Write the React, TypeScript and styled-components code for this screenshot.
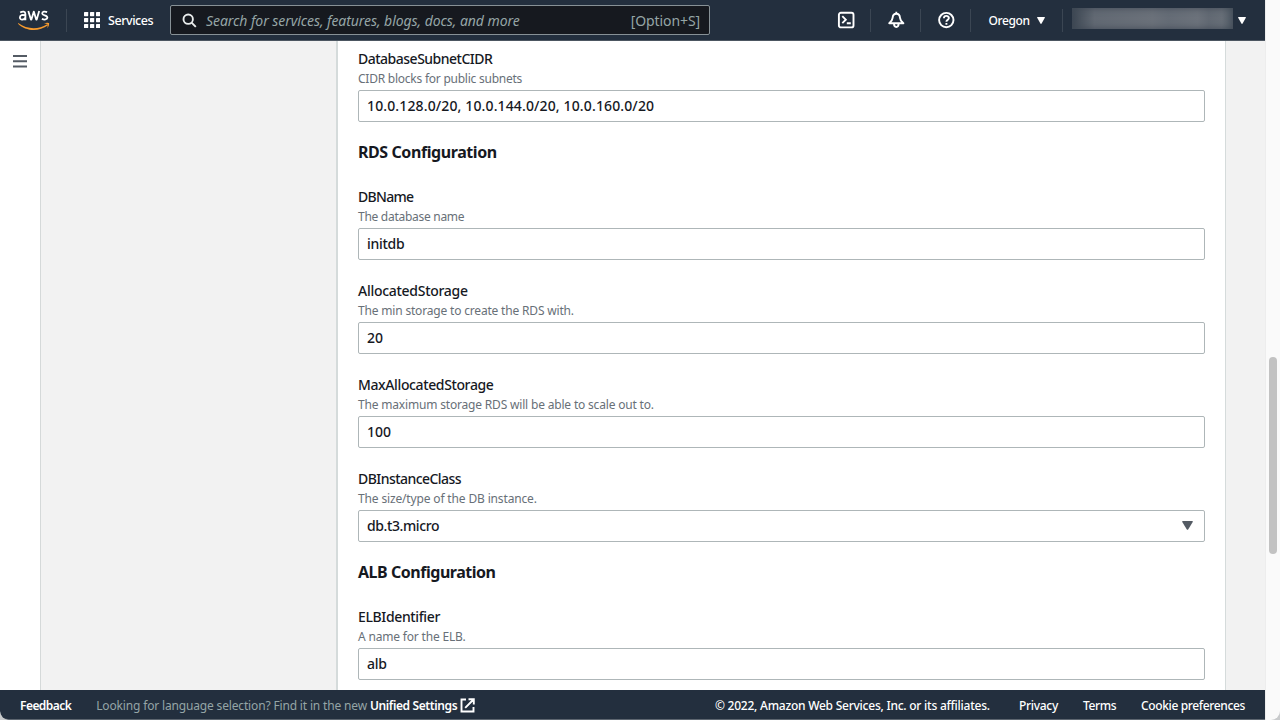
import React from 'react';
import styled, { createGlobalStyle } from 'styled-components';

const GlobalStyle = createGlobalStyle`
  * { box-sizing: border-box; }
  body { margin: 0; background: #c8cacc; overflow: hidden; }
  body, input, button { font-family: 'Noto Sans', 'Open Sans', sans-serif; }
`;

const Browser = styled.div`
  display: flex;
  width: 1280px;
  height: 720px;
  background: #fafafa;
  border-radius: 0 0 9px 9px;
  overflow: hidden;
`;

const Page = styled.div`
  display: flex;
  flex-direction: column;
  width: 1265px;
  height: 720px;
`;

const Track = styled.div`
  flex: 1;
  padding: 357px 3px 0 4px;
  border-left: 1px solid #ededed;
`;

const Thumb = styled.div`
  width: 8px;
  height: 197px;
  margin-left: -1px;
  border-radius: 4px;
  background: #c2c2c2;
`;

const Header = styled.header`
  display: flex;
  align-items: center;
  flex: none;
  height: 41px;
  background: #232f3e;
  border-bottom: 1px solid #4c5661;
  color: #fff;
`;

const LogoLink = styled.div`
  display: flex;
  width: 67px;
  padding-left: 17px;
  border-right: 1px solid #3b4653;
  height: 23px;
`;

const Services = styled.div`
  display: flex;
  align-items: center;
  gap: 8px;
  width: 103px;
  padding-left: 17px;
  svg { flex: none; }
`;

const Label = styled.span<{ $track?: number; $size?: number; $weight?: number; $color?: string }>`
  white-space: nowrap;
  font-size: ${p => p.$size ?? 12}px;
  font-weight: ${p => p.$weight ?? 500};
  letter-spacing: ${p => p.$track ?? 0}px;
  color: ${p => p.$color ?? '#fff'};
`;

const SearchBox = styled.div`
  display: flex;
  align-items: center;
  width: 540px;
  height: 30px;
  padding: 0 9px 0 11px;
  border: 1px solid #879196;
  border-radius: 2px;
  background: #16191f;
  svg { flex: none; margin-right: 9px; }
`;

const Placeholder = styled.span`
  flex: 1;
  font-size: 14px;
  font-style: italic;
  letter-spacing: -0.06px;
  color: #95a5a6;
  white-space: nowrap;
`;

const Tools = styled.div`
  display: flex;
  align-items: center;
  margin-left: auto;
`;

const Tool = styled.div<{ $width: number; $last?: boolean }>`
  display: flex;
  align-items: center;
  justify-content: ${p => (p.$last ? 'flex-start' : 'center')};
  gap: ${p => (p.$last ? 5 : 7)}px;
  width: ${p => p.$width}px;
  height: 23px;
  padding-left: ${p => (p.$last ? 9 : 0)}px;
  border-right: ${p => (p.$last ? 'none' : '1px solid #3b4653')};
`;

const Redacted = styled.div`
  width: 161px;
  height: 21px;
  margin-bottom: 3px;
  background: linear-gradient(90deg, #3c4652 0, #626973 14%, #6b717a 50%, #656c76 60%, #6c727b 78%, #626973 85%, #676e77 93%, #505a65 100%);
  box-shadow: inset 0 0 7px #3f4955;
`;

const Body = styled.div`
  display: flex;
  flex: 1;
  min-height: 0;
  overflow: hidden;
  background: #f2f2f2;
`;

const Rail = styled.nav`
  display: flex;
  align-items: flex-start;
  width: 41px;
  padding: 14px 0 0 13px;
  border-right: 1px solid #d5d9d9;
  background: #fff;
`;

const Panel = styled.main`
  width: 890px;
  margin-left: 295px;
  padding: 8px 20px 0;
  border: solid #d5dbdb;
  border-width: 0 1px 0 2px;
  background: #fff;
  overflow: hidden;
`;

const Section = styled.h3<{ $track: number }>`
  margin: -3px 0 23px;
  height: 24px;
  font-size: 16px;
  line-height: 24px;
  font-weight: 700;
  letter-spacing: ${p => p.$track}px;
  color: #16191f;
`;

const Field = styled.div`
  display: flex;
  flex-direction: column;
  height: 73px;
  margin-bottom: 21px;
`;

const FieldLabel = styled.label<{ $track: number }>`
  height: 20px;
  font-size: 14px;
  line-height: 20px;
  font-weight: 500;
  letter-spacing: ${p => p.$track}px;
  color: #16191f;
`;

const Hint = styled.div<{ $track: number }>`
  height: 21px;
  font-size: 12px;
  line-height: 20px;
  letter-spacing: ${p => p.$track}px;
  color: #687078;
`;

const Control = styled.div<{ $track: number }>`
  display: flex;
  align-items: center;
  justify-content: space-between;
  height: 32px;
  padding: 0 11px 1px 8px;
  border: 1px solid #aeb6b8;
  border-radius: 2px;
  font-size: 14px;
  font-weight: 500;
  letter-spacing: ${p => p.$track}px;
  color: #16191f;
`;

const Footer = styled.footer`
  display: flex;
  align-items: center;
  flex: none;
  height: 30px;
  padding: 2px 20px 0;
  border-bottom: 1px solid #5d6670;
  background: #232f3e;
  border-bottom-left-radius: 8px;
`;

const Language = styled.div`
  display: flex;
  align-items: center;
  margin-left: 25px;
  gap: 3px;
`;

const Legal = styled.div`
  display: flex;
  align-items: center;
  margin-left: auto;
`;

const LegalItem = styled(Label)<{ $width: number }>`
  width: ${p => p.$width}px;
`;

const AwsLogo = () => (
  <svg width="34" height="23" viewBox="0 0 34 23" fill="none">
    <g stroke="#fff" strokeWidth="1.8" strokeLinejoin="round">
      <path d="M3.2 3.5C5.7 2 8.400 2.200 8.400 5v6.200M8.300 6.400C5.600 5.600 2.900 6 2.900 8.500c0 3.100 4.400 2.600 5.500-.1" />
      <path d="M11.300 2.100l2.600 8.500h.5l2.400-8 2.400 8h.5l2.500-8.500" />
      <path d="M30.100 3.100c-2.300-.9-4.900-.6-4.900 1.300 0 2.400 5.200 1.500 5.200 4.200 0 2.100-3.100 2.400-5.500 1.300" />
    </g>
    <path d="M1.200 14.100c9 6.400 19.700 7 29 1.100l.9 1.100C20.900 23.700 8.300 21.800 1 14.700z" fill="#f79b2e" />
    <path d="M26.900 14.600c2-1.300 4.700-1 5.100-.5.400.6 0 3.500-1.800 5.200.3-1.500.9-3.300.4-3.900-.5-.6-2.300-.6-3.700-.8z" fill="#f79b2e" />
  </svg>
);

const GridIcon = () => (
  <svg width="16" height="16" viewBox="0 0 16 16" fill="#fff">
    {[0, 6, 12].map(y => [0, 6, 12].map(x => (
      <rect key={`${x}-${y}`} x={x} y={y} width="4.200" height="4.200" rx=".6" />
    )))}
  </svg>
);

const SearchIcon = () => (
  <svg width="15" height="15" viewBox="0 0 15 15" fill="none" stroke="#eaeded" strokeWidth="1.900">
    <circle cx="6.200" cy="6.200" r="4.700" />
    <path d="M9.600 9.600l4.200 4.200" />
  </svg>
);

const ShellIcon = () => (
  <svg width="18" height="18" viewBox="0 0 18 18" fill="none" stroke="#fff" strokeWidth="1.900">
    <rect x="1.900" y="1.800" width="14.600" height="14.600" rx="2" />
    <path d="M5.300 5.200l3.500 3.500-3.500 3.500M9.800 12.300h4" />
  </svg>
);

const BellIcon = () => (
  <svg width="18" height="18" viewBox="0 0 18 18" fill="none" stroke="#fff" strokeWidth="1.900" strokeLinejoin="round">
    <path d="M9.300 2.700C7 2.700 5.800 4.300 5.600 6.800c-.2 2.400-1.200 3.800-3.400 5.400h14.200c-2.200-1.600-3.200-3-3.400-5.400-.2-2.500-1.400-4.100-3.700-4.100zM9.300.8v2" />
    <path d="M7 12.500c0 4.600 4.600 4.600 4.600 0" />
  </svg>
);

const HelpIcon = () => (
  <svg width="18" height="18" viewBox="0 0 18 18" fill="none" stroke="#fff" strokeWidth="1.900">
    <circle cx="9.300" cy="9.100" r="7.200" />
    <path d="M6.900 7.300c0-3.200 5-3.100 5-.2 0 1.900-2.500 1.700-2.500 3.600M9.400 12v1.800" />
  </svg>
);

const Caret = ({ width = 8, height = 7, color = '#fff' }: { width?: number; height?: number; color?: string }) => (
  <svg width={width} height={height} viewBox="0 0 8 7" preserveAspectRatio="none" fill={color}>
    <path d="M.5 0h7q.6 0 .3.700L4.600 6.500q-.6.800-1.200 0L.2.700Q-.1 0 .5 0z" />
  </svg>
);

const MenuIcon = () => (
  <svg width="14" height="13" viewBox="0 0 14 13" fill="none" stroke="#545b64" strokeWidth="2">
    <path d="M0 1h14M0 6.200h14M0 11.400h14" />
  </svg>
);

const ExternalIcon = () => (
  <svg width="15" height="15" viewBox="0 0 15 15" fill="none" stroke="#fff" strokeWidth="1.900">
    <path d="M6 1.500H1.500v12h12V9M8.500 1.200h5.300v5.300M13.500 1.500L5.200 9.800" />
  </svg>
);

type FieldProps = {
  label: string; labelTrack: number; hint: string; hintTrack: number;
  value: string; valueTrack: number; select?: boolean;
};

const FormField = ({ label, labelTrack, hint, hintTrack, value, valueTrack, select }: FieldProps) => (
  <Field>
    <FieldLabel $track={labelTrack}>{label}</FieldLabel>
    <Hint $track={hintTrack}>{hint}</Hint>
    <Control $track={valueTrack}>
      {value}
      {select && <Caret width={11} height={9} color="#545b64" />}
    </Control>
  </Field>
);

export default function App() {
  return (
    <>
      <GlobalStyle />
      <Browser>
        <Page>
          <Header>
            <LogoLink><AwsLogo /></LogoLink>
            <Services>
              <GridIcon />
              <Label $size={12.5} $track={-0.45}>Services</Label>
            </Services>
            <SearchBox>
              <SearchIcon />
              <Placeholder>Search for services, features, blogs, docs, and more</Placeholder>
              <Label $size={14} $weight={400} $track={-0.1} $color="#95a5a6">[Option+S]</Label>
            </SearchBox>
            <Tools>
              <Tool $width={50}><ShellIcon /></Tool>
              <Tool $width={50}><BellIcon /></Tool>
              <Tool $width={50}><HelpIcon /></Tool>
              <Tool $width={92}>
                <Label $track={-0.4}>Oregon</Label>
                <Caret />
              </Tool>
              <Tool $width={202} $last>
                <Redacted />
                <Caret />
              </Tool>
            </Tools>
          </Header>
          <Body>
            <Rail><MenuIcon /></Rail>
            <Panel>
              <FormField label="DatabaseSubnetCIDR" labelTrack={-0.5} hint="CIDR blocks for public subnets" hintTrack={-0.24} value="10.0.128.0/20, 10.0.144.0/20, 10.0.160.0/20" valueTrack={0.13} />
              <Section $track={-0.42}>RDS Configuration</Section>
              <FormField label="DBName" labelTrack={-0.7} hint="The database name" hintTrack={-0.28} value="initdb" valueTrack={-0.3} />
              <FormField label="AllocatedStorage" labelTrack={-0.28} hint="The min storage to create the RDS with." hintTrack={-0.18} value="20" valueTrack={0} />
              <FormField label="MaxAllocatedStorage" labelTrack={-0.38} hint="The maximum storage RDS will be able to scale out to." hintTrack={-0.18} value="100" valueTrack={0} />
              <FormField label="DBInstanceClass" labelTrack={-0.55} hint="The size/type of the DB instance." hintTrack={-0.15} value="db.t3.micro" valueTrack={-0.4} select />
              <Section $track={-0.47}>ALB Configuration</Section>
              <FormField label="ELBIdentifier" labelTrack={-0.37} hint="A name for the ELB." hintTrack={-0.18} value="alb" valueTrack={-0.3} />
            </Panel>
          </Body>
          <Footer>
            <Label $weight={600} $track={-0.55}>Feedback</Label>
            <Language>
              <Label $weight={400} $track={-0.16} $color="#95a5a6">Looking for language selection? Find it in the new</Label>
              <Label $weight={600} $track={-0.38}>Unified Settings</Label>
              <ExternalIcon />
            </Language>
            <Legal>
              <LegalItem $width={304} $track={-0.24}>© 2022, Amazon Web Services, Inc. or its affiliates.</LegalItem>
              <LegalItem $width={64} $track={-0.3}>Privacy</LegalItem>
              <LegalItem $width={58} $track={-0.4}>Terms</LegalItem>
              <LegalItem $width={104} $track={-0.36}>Cookie preferences</LegalItem>
            </Legal>
          </Footer>
        </Page>
        <Track><Thumb /></Track>
      </Browser>
    </>
  );
}
